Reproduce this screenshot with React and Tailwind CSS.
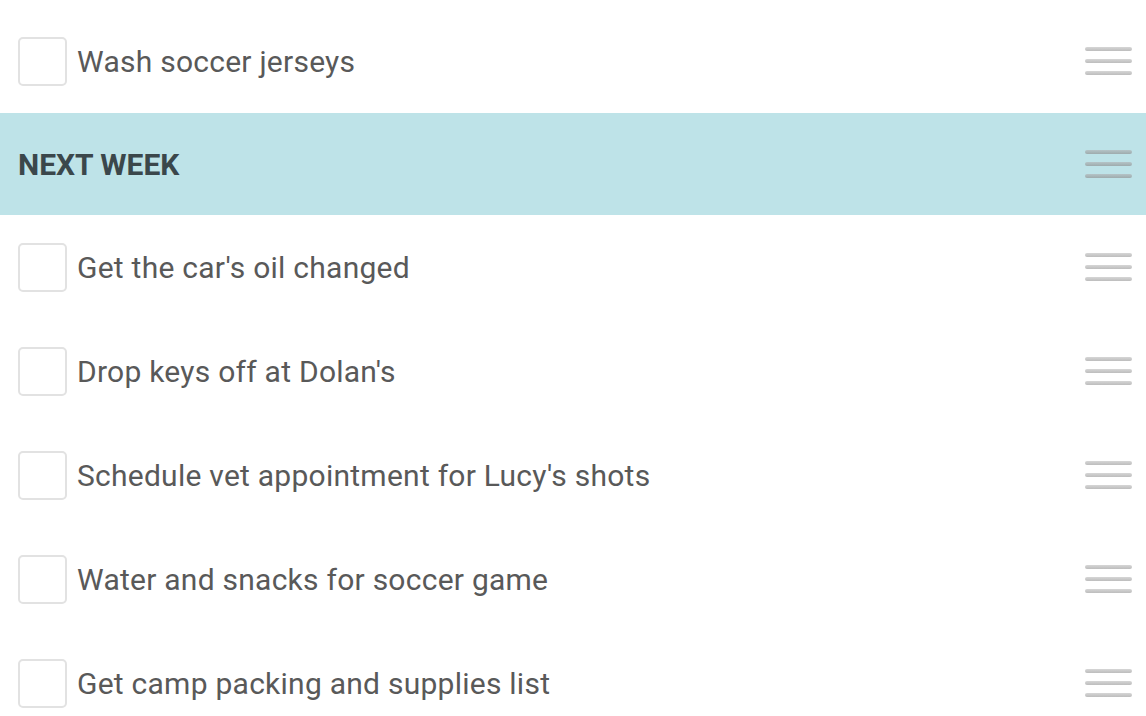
import React from 'react';

const sections = [
  { type: 'task', label: 'Wash soccer jerseys' },
  { type: 'header', label: 'NEXT WEEK' },
  { type: 'task', label: "Get the car's oil changed" },
  { type: 'task', label: "Drop keys off at Dolan's" },
  { type: 'task', label: "Schedule vet appointment for Lucy's shots" },
  { type: 'task', label: 'Water and snacks for soccer game' },
  { type: 'task', label: 'Get camp packing and supplies list' },
];

const DragHandle = ({ dark }) => (
  <div className="flex flex-col gap-[8px] w-[47px]">
    {[0, 1, 2].map((i) => (
      <div
        key={i}
        className={
          dark
            ? 'h-[4px] rounded-full bg-gradient-to-b from-[#b5c4c7] to-[#9eabad]'
            : 'h-[4px] rounded-full bg-gradient-to-b from-[#d6d6d6] to-[#bdbdbd]'
        }
      />
    ))}
  </div>
);

const TaskRow = ({ label }) => (
  <div className="h-[104px] flex items-center pl-[18px] pr-[14px] bg-white">
    <div className="w-[49px] h-[49px] rounded-[5px] border-2 border-[#e2e2e2] shrink-0" />
    <span className="ml-[10px] flex-1 text-[30px] leading-none pt-[2px] tracking-[0.25px] text-[#595959]">{label}</span>
    <DragHandle />
  </div>
);

const HeaderRow = ({ label }) => (
  <div className="h-[102px] flex items-center pl-[18px] pr-[14px] bg-[#bee3e8]">
    <span className="flex-1 text-[30px] leading-none pt-[2px] font-bold text-[#3b474b]">{label}</span>
    <DragHandle dark />
  </div>
);

export default function App() {
  return (
    <div
      className="w-[1146px] h-[716px] overflow-hidden bg-white"
      style={{ fontFamily: 'Roboto, "Liberation Sans", sans-serif' }}
    >
      <div className="-mt-[95px]">
        <div className="h-[104px]" />
        {sections.map((s, i) =>
          s.type === 'header' ? (
            <HeaderRow key={i} label={s.label} />
          ) : (
            <TaskRow key={i} label={s.label} />
          )
        )}
      </div>
    </div>
  );
}
